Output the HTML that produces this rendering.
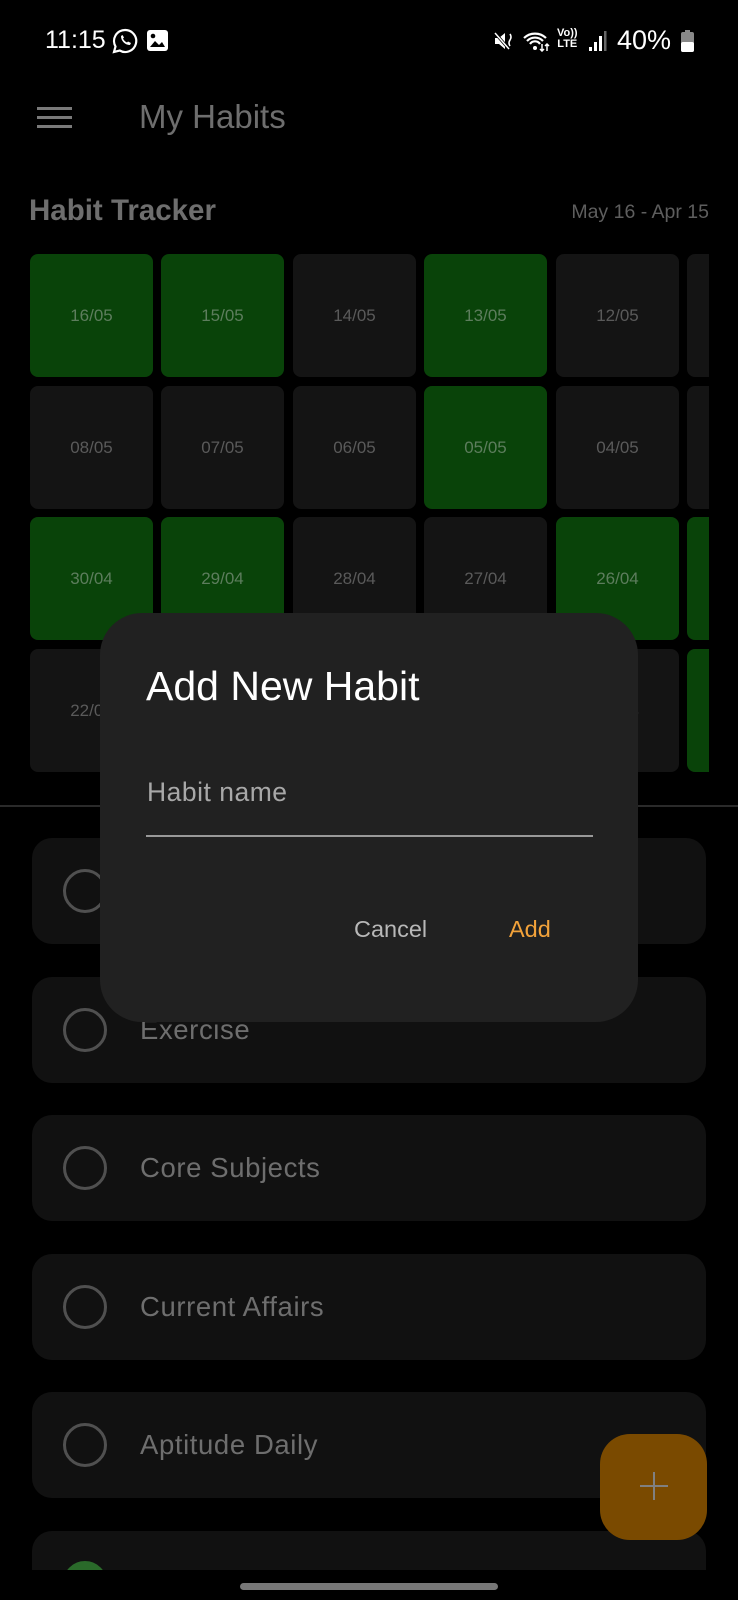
<!DOCTYPE html>
<html><head><meta charset="utf-8"><style>
*{margin:0;padding:0;box-sizing:border-box}
body{width:738px;height:1600px;background:#000;overflow:hidden;position:relative;font-family:"Liberation Sans",sans-serif}
.a{position:absolute}
.cell{position:absolute;width:123px;height:123px;border-radius:8px;background:#141414;color:#5a5a5a;font-size:17px;display:flex;align-items:center;justify-content:center}
.g{background:#094309;color:#5d7d5d}
.card{position:absolute;left:32px;width:674px;height:106px;border-radius:20px;background:#111}
.card .c{position:absolute;left:31px;top:31px;width:44px;height:44px;border-radius:50%;border:3px solid #505050}
.card .t{position:absolute;left:108px;top:0;line-height:106px;font-size:27.5px;color:#6e6e6e;letter-spacing:0.6px}
</style></head><body>
<!-- status bar -->
<div class="a" style="left:45px;top:25px;font-size:25px;color:#fff;line-height:30px">11:15</div>
<svg class="a" style="left:112px;top:28px" width="26" height="26" viewBox="0 0 26 26"><path d="M13 2a11 11 0 0 0-9.5 16.5L2 24l5.7-1.5A11 11 0 1 0 13 2z" fill="none" stroke="#fff" stroke-width="2.2"/><path d="M9 8c0 5 4 9 9 9l1-2-3-1.5-1 1c-2-1-3-2-4-4l1-1L10.5 7z" fill="#fff"/></svg>
<svg class="a" style="left:147px;top:30px" width="21" height="21" viewBox="0 0 21 21"><rect width="21" height="21" rx="3" fill="#fff"/><circle cx="6" cy="6" r="2.3" fill="#000"/><path d="M3 17l5-6 4 4 3-3 3 5z" fill="#000"/></svg>
<svg class="a" style="left:493px;top:30px" width="22" height="22" viewBox="0 0 22 22"><path d="M2 8h4l6-5v16l-6-5H2z" fill="#fff"/><path d="M2 3l14 16" stroke="#000" stroke-width="3"/><path d="M2 3l14 16" stroke="#fff" stroke-width="1.5"/><path d="M17 4q2 3 0 6q-2 3 0 6" stroke="#fff" stroke-width="1.6" fill="none"/></svg>
<svg class="a" style="left:523px;top:30px" width="28" height="22" viewBox="0 0 28 22"><path d="M1 8a16 16 0 0 1 22 0M4 11a11 11 0 0 1 16 0M7 14a6 6 0 0 1 10 0" stroke="#fff" stroke-width="2.2" fill="none"/><circle cx="12" cy="18" r="2" fill="#fff"/><path d="M19 14v7M17 19l2 2 2-2M24 21v-7M22 16l2-2 2 2" stroke="#fff" stroke-width="1.5" fill="none"/></svg>
<div class="a" style="left:557px;top:28px;font-size:11px;font-weight:bold;color:#fff;line-height:11px;text-align:center">Vo))<br>LTE</div>
<svg class="a" style="left:588px;top:30px" width="20" height="22" viewBox="0 0 20 22"><rect x="1" y="17" width="3" height="4" fill="#fff"/><rect x="6" y="12" width="3" height="9" fill="#fff"/><rect x="11" y="6" width="3" height="15" fill="#fff"/><rect x="16" y="1" width="2.5" height="20" fill="#666"/></svg>
<div class="a" style="left:617px;top:25px;font-size:27px;color:#fff;line-height:30px">40%</div>
<svg class="a" style="left:681px;top:30px" width="13" height="22" viewBox="0 0 13 22"><rect x="4" y="0" width="5" height="3" fill="#888"/><rect x="0" y="2" width="13" height="20" rx="2" fill="#888"/><rect x="0" y="12" width="13" height="10" rx="2" fill="#fff"/></svg>
<!-- app bar -->
<div class="a" style="left:37px;top:107px;width:35px;height:3px;background:#7a7a7a;box-shadow:0 9px 0 #7a7a7a,0 18px 0 #7a7a7a"></div>
<div class="a" style="left:139px;top:98px;font-size:33px;color:#6e6e6e;line-height:38px">My Habits</div>
<div class="a" style="left:29px;top:194px;font-size:29.5px;font-weight:bold;color:#6e6e6e;line-height:34px">Habit Tracker</div>
<div class="a" style="right:29px;top:200px;font-size:19.5px;color:#5e5e5e;line-height:24px">May 16 - Apr 15</div>
<!-- grid -->
<div class="a" style="left:0;top:0;width:709px;height:800px;overflow:hidden">
<div class="cell g" style="left:30px;top:254px">16/05</div>
<div class="cell g" style="left:161px;top:254px">15/05</div>
<div class="cell" style="left:293px;top:254px">14/05</div>
<div class="cell g" style="left:424px;top:254px">13/05</div>
<div class="cell" style="left:556px;top:254px">12/05</div>
<div class="cell" style="left:687px;top:254px"></div>
<div class="cell" style="left:30px;top:386px">08/05</div>
<div class="cell" style="left:161px;top:386px">07/05</div>
<div class="cell" style="left:293px;top:386px">06/05</div>
<div class="cell g" style="left:424px;top:386px">05/05</div>
<div class="cell" style="left:556px;top:386px">04/05</div>
<div class="cell" style="left:687px;top:386px"></div>
<div class="cell g" style="left:30px;top:517px">30/04</div>
<div class="cell g" style="left:161px;top:517px">29/04</div>
<div class="cell" style="left:293px;top:517px">28/04</div>
<div class="cell" style="left:424px;top:517px">27/04</div>
<div class="cell g" style="left:556px;top:517px">26/04</div>
<div class="cell g" style="left:687px;top:517px"></div>
<div class="cell" style="left:30px;top:649px">22/04</div>
<div class="cell" style="left:161px;top:649px"></div>
<div class="cell" style="left:293px;top:649px"></div>
<div class="cell" style="left:424px;top:649px"></div>
<div class="cell" style="left:556px;top:649px">18/04</div>
<div class="cell g" style="left:687px;top:649px"></div>
</div>
<div class="a" style="left:0;top:805px;width:738px;height:2px;background:#2a2a2a"></div>
<!-- cards -->
<div class="a" style="left:0;top:0;width:738px;height:1570px;overflow:hidden">
<div class="card" style="top:838px"><div class="c"></div><div class="t">Study</div></div>
<div class="card" style="top:977px"><div class="c"></div><div class="t">Exercise</div></div>
<div class="card" style="top:1115px"><div class="c"></div><div class="t">Core Subjects</div></div>
<div class="card" style="top:1254px"><div class="c"></div><div class="t">Current Affairs</div></div>
<div class="card" style="top:1392px"><div class="c"></div><div class="t">Aptitude Daily</div></div>
<div class="card" style="top:1531px"><div class="c" style="background:#2a6a2a;border-color:#2a6a2a;top:30px"></div></div>
</div>
<!-- FAB -->
<div class="a" style="left:600px;top:1434px;width:107px;height:106px;border-radius:30px;background:#7a4a00"></div>
<div class="a" style="left:640px;top:1485px;width:28px;height:2px;background:#808080"></div>
<div class="a" style="left:653px;top:1472px;width:2px;height:28px;background:#808080"></div>
<!-- home bar -->
<div class="a" style="left:240px;top:1583px;width:258px;height:7px;border-radius:4px;background:#777"></div>
<!-- dialog -->
<div class="a" style="left:100px;top:613px;width:538px;height:409px;border-radius:42px;background:#212121"></div>
<div class="a" style="left:146px;top:662px;font-size:41px;color:#fff;line-height:48px">Add New Habit</div>
<div class="a" style="left:147px;top:776px;font-size:26.5px;color:#a8a8a8;line-height:32px;letter-spacing:0.5px">Habit name</div>
<div class="a" style="left:146px;top:835px;width:447px;height:2px;background:#999"></div>
<div class="a" style="left:354px;top:915px;font-size:23.5px;color:#b8b8b8;line-height:28px">Cancel</div>
<div class="a" style="left:509px;top:915px;font-size:23.5px;color:#f2a23a;line-height:28px">Add</div>
</body></html>
